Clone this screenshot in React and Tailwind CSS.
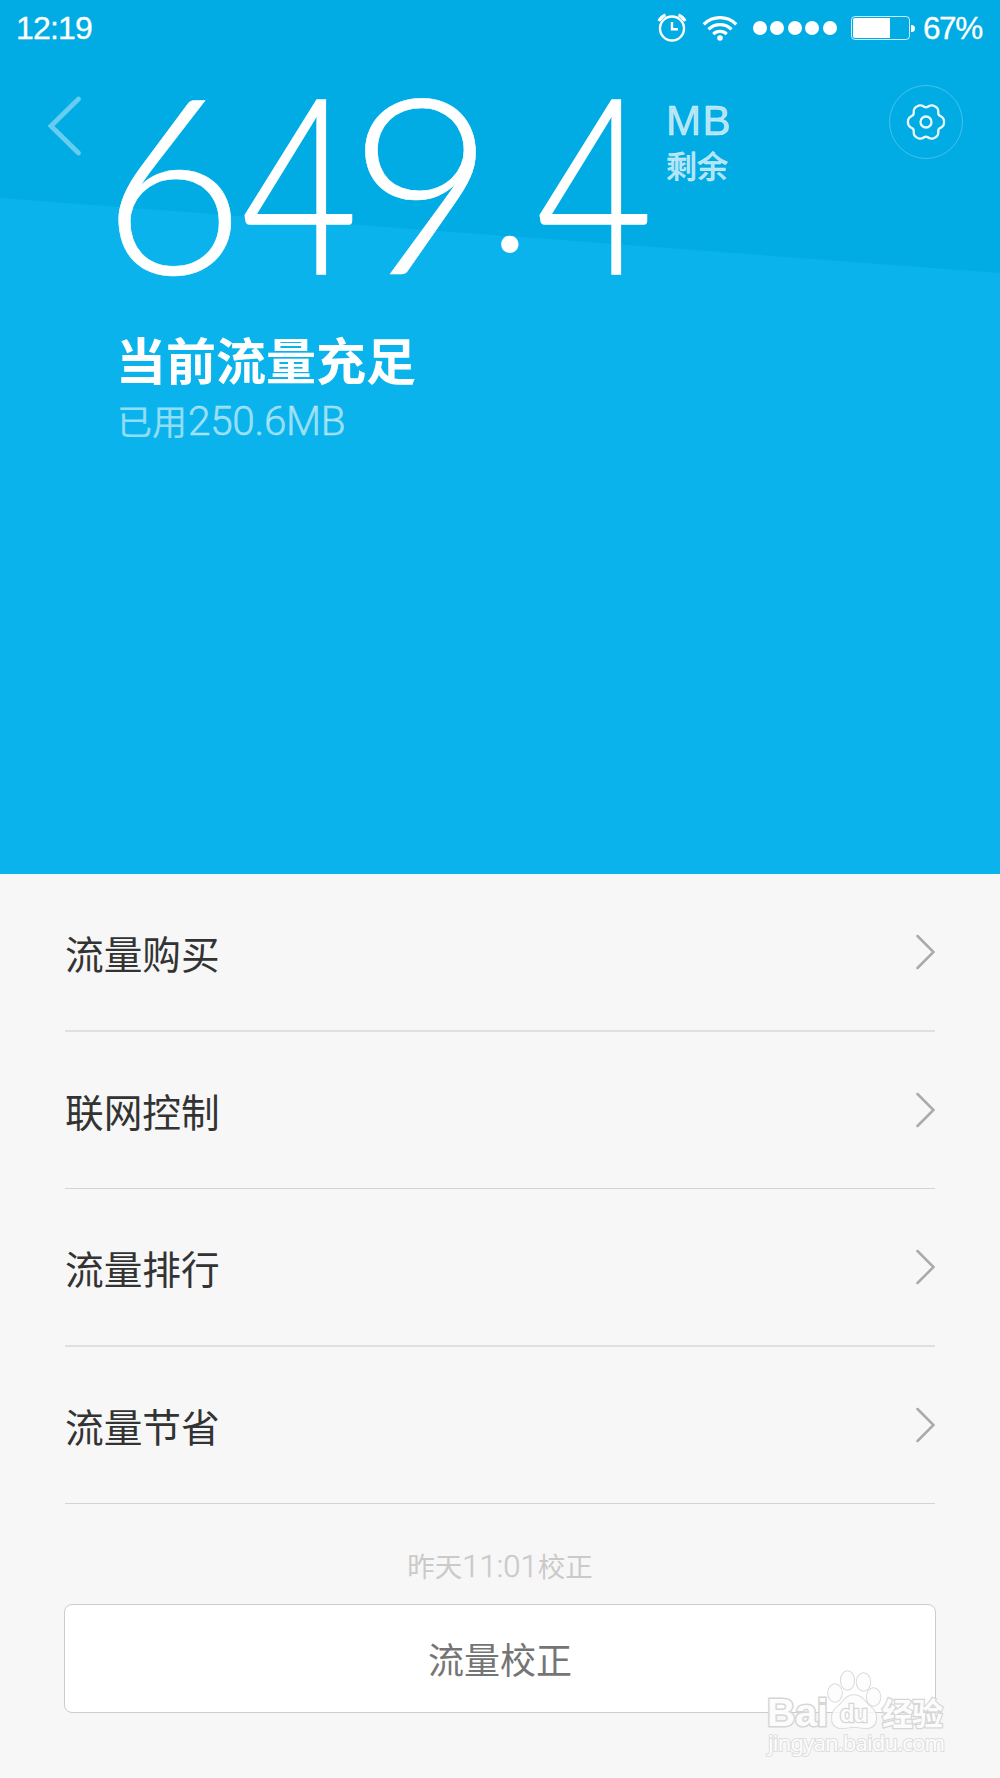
import { clsx } from 'clsx';

const menu = ['流量购买', '联网控制', '流量排行', '流量节省'];

// six soft lobes around the centre, flattened on the outside
const gearPath = (() => {
  const pts = [];
  for (let a = 0; a < 360; a += 3) {
    const t = (a * Math.PI) / 180;
    const r = 16.7 + 1.7 * (Math.cos(6 * t) - 0.22 * Math.cos(12 * t));
    pts.push(`${(20 + r * Math.cos(t)).toFixed(2)},${(20 + r * Math.sin(t)).toFixed(2)}`);
  }
  return `M${pts.join('L')}Z`;
})();

function AlarmIcon() {
  return (
    <svg width="30" height="30" viewBox="0 0 30 30" fill="none" stroke="#fff" className="ml-auto">
      <circle cx="15" cy="15.500" r="12" strokeWidth="2.400" />
      <path d="M15 9v7.300h6" strokeWidth="2.400" />
      <path d="M1.800 8C3 5.500 5.500 3 8.500 1.800M28.200 8C27 5.500 24.500 3 21.500 1.800" strokeWidth="3" />
    </svg>
  );
}

function WifiIcon() {
  return (
    <svg width="36" height="28" viewBox="0 0 36 28" fill="none" stroke="#fff" strokeWidth="3.300" className="ml-[15px]">
      <path d="M1.700 10.300a23 23 0 0 1 32.600 0M6.500 15.300a16.300 16.300 0 0 1 23 0M11.300 20.200a9.500 9.500 0 0 1 13.400 0" />
      <circle cx="18" cy="24" r="2.800" fill="#fff" stroke="none" />
    </svg>
  );
}

function StatusBar() {
  return (
    <div className="flex h-14 items-center pl-4 pr-[17px] text-[32px] leading-none text-white">
      <span className="tracking-[-0.8px] [-webkit-text-stroke:0.3px]">12:19</span>
      <AlarmIcon />
      <WifiIcon />
      <div className="ml-[15px] flex gap-[3.600px]">
        {[0, 1, 2, 3, 4].map((i) => (
          <i key={i} className="size-[14px] rounded-full bg-white" />
        ))}
      </div>
      <div className="ml-[14px] flex items-center">
        <div className="h-6 w-[59px] rounded-[4px] border border-white/80 p-px">
          <div className="h-full w-[37px] rounded-l-[2px] bg-white" />
        </div>
        <div className="ml-px h-[7px] w-1 rounded-r-full bg-white" />
      </div>
      <span className="ml-2 w-[60px] whitespace-nowrap pt-px text-[31.500px] tracking-[-1.4px] [-webkit-text-stroke:0.3px]">67%</span>
    </div>
  );
}

function Amount() {
  return (
    <div className="ml-4 mt-[35px] flex w-[564px] whitespace-nowrap font-['Lato'] text-[246px] font-light leading-[176px] text-white">
      <span className="w-[139px] shrink-0 [-webkit-text-stroke:0.6px]">6</span>
      <span className="w-[108px] shrink-0">
        <span className="inline-block origin-left scale-x-[.82] [-webkit-text-stroke:1.5px]">4</span>
      </span>
      <span className="w-[139px] shrink-0">
        <span className="inline-block origin-left scale-x-[1.02] [-webkit-text-stroke:0.6px]">9</span>
      </span>
      <span className="w-[48px] shrink-0">
        <span className="inline-block origin-[0_132px] translate-y-[-10px] scale-[.76]">.</span>
      </span>
      <span className="w-[129px] shrink-0">
        <span className="inline-block origin-left scale-x-[.82] [-webkit-text-stroke:1.5px]">4</span>
      </span>
    </div>
  );
}

function Hero() {
  return (
    <header className="relative h-[874px] bg-[#0ab3ec]">
      <svg className="absolute inset-0" width="1000" height="280" viewBox="0 0 1000 280">
        <path d="M0 0H1000V273L0 198Z" fill="#01ace5" />
      </svg>

      <div className="relative">
        <StatusBar />
        <div className="flex h-[224px] items-start pr-[37px]">
          <svg width="70" height="64" viewBox="0 0 70 64" fill="none" className="ml-4 mt-[38px]">
            <path d="M62.500 5L35 32L62.500 59" stroke="#fff" strokeOpacity=".4" strokeWidth="4.800" strokeLinecap="round" />
          </svg>
          <Amount />
          <div className="mt-[42px] text-white/70">
            <div className="text-[42px] leading-[46px] tracking-[1.5px] [-webkit-text-stroke:0.6px]">MB</div>
            <div className="mt-[4px] text-[31px] font-medium leading-[40px] [-webkit-text-stroke:0.4px]">剩余</div>
          </div>
          <button className="ml-auto mt-[29px] flex size-[74px] items-center justify-center rounded-full border-[1.5px] border-white/25">
            <svg width="40" height="40" viewBox="0 0 40 40" fill="none" stroke="#fff" strokeOpacity=".92" strokeWidth="2.300">
              <path d={gearPath} />
              <circle cx="20" cy="20" r="5.500" />
            </svg>
          </button>
        </div>

        <h1 className="ml-[116px] mt-[53px] text-[50px] font-bold leading-[60px] text-white">当前流量充足</h1>
        <p className="ml-[117px] mt-[3px] flex items-baseline text-[35px] leading-[50px] text-white/55">
          已用<span className="pl-px font-['Roboto'] text-[40.500px] font-light tracking-[-0.3px] [-webkit-text-stroke:0.4px]">250.6MB</span>
        </p>
      </div>
    </header>
  );
}

function MenuRow({ label, index }) {
  return (
    <li
      className={clsx(
        'flex items-center justify-between',
        index % 2 ? 'h-[157px] border-b border-[#d4d4d4]' : 'h-[158px] border-b-2 border-[#e0e0e0]'
      )}
    >
      <span className="pt-[8px] text-[38.700px] leading-none text-[#333]">{label}</span>
      <svg width="20" height="36" viewBox="0 0 20 36" fill="none" stroke="#aaa" strokeWidth="2.500" strokeLinecap="round">
        <path d="M2.500 2L18.500 18L2.500 34" />
      </svg>
    </li>
  );
}

function Watermark() {
  return (
    <svg
      className="pointer-events-none absolute bottom-[16px] right-[48px]"
      width="188"
      height="96"
      viewBox="0 0 188 96"
      fill="#fcfcfc"
      stroke="#d6d6d6"
      strokeWidth="1.500"
    >
      <g fontFamily="'Liberation Sans', 'Noto Sans CJK SC', sans-serif" fontWeight="bold" paintOrder="stroke">
        <g fillOpacity=".8">
          <ellipse cx="71" cy="27" rx="7" ry="9" />
          <ellipse cx="83.500" cy="14.500" rx="6.800" ry="9.500" />
          <ellipse cx="99.500" cy="16" rx="7" ry="9" />
          <ellipse cx="109.500" cy="31" rx="7" ry="9" />
          <path d="M90 29c-8 0-11 7-16 11-9 7-8 20 1 22 6 1 10-1 15-1s9 2 15 1c9-2 10-15 1-22-5-4-8-11-16-11Z" />
        </g>
        <text x="3" y="59.500" fontSize="38" textLength="61" lengthAdjust="spacingAndGlyphs" strokeWidth="3">Bai</text>
        <text x="76" y="56" fontSize="24" textLength="28" strokeWidth="2.500">du</text>
        <text x="118" y="58.500" fontSize="31" textLength="61" strokeWidth="2.500">经验</text>
      </g>
      <text x="4" y="85" fontFamily="'Noto Sans', sans-serif" fontSize="22" textLength="177" strokeWidth="2" stroke="#dedede" paintOrder="stroke">
        jingyan.baidu.com
      </text>
    </svg>
  );
}

export default function App() {
  return (
    <div className="relative h-[1778px] w-[1000px] overflow-hidden bg-[#f7f7f7] font-['Liberation_Sans','Noto_Sans_CJK_SC',sans-serif]">
      <Hero />
      <main className="px-16">
        <ul className="px-px">
          {menu.map((label, i) => (
            <MenuRow key={label} label={label} index={i} />
          ))}
        </ul>
        <p className="mt-[43px] flex items-baseline justify-center text-[27.500px] leading-[40px] text-[#cacaca]">
          昨天<span className="font-['Roboto'] text-[31px] font-light [-webkit-text-stroke:0.4px]">11:01</span>校正
        </p>
        <button className="mt-4 block h-[109px] w-full rounded-[8px] border border-[#ccc] bg-white pt-[6px] text-[36px] leading-none text-[#757575]">
          流量校正
        </button>
      </main>
      <Watermark />
    </div>
  );
}
